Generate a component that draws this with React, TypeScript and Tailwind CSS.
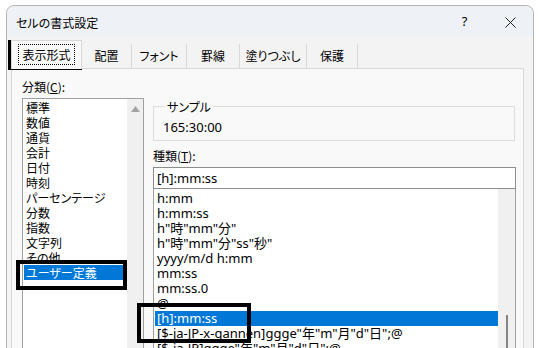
import React from "react";

const cats = [
  "標準",
  "数値",
  "通貨",
  "会計",
  "日付",
  "時刻",
  "パーセンテージ",
  "分数",
  "指数",
  "文字列",
  "その他",
  "ユーザー定義",
];

const types = [
  "h:mm",
  "h:mm:ss",
  'h"時"mm"分"',
  'h"時"mm"分"ss"秒"',
  "yyyy/m/d h:mm",
  "mm:ss",
  "mm:ss.0",
  "@",
  "[h]:mm:ss",
  '[$-ja-JP-x-gannen]ggge"年"m"月"d"日";@',
  '[$-ja-JP]ggge"年"m"月"d"日";@',
  "[$-ja-JP]gggy",
];

const tabs = [
  { label: "配置", w: "w-[50px]" },
  { label: "フォント", w: "w-[55px]" },
  { label: "罫線", w: "w-[53px]" },
  { label: "塗りつぶし", w: "w-[67px]" },
  { label: "保護", w: "w-[51px]" },
];

export default function App() {
  return (
    <div className="relative h-[348px] w-[539px] overflow-hidden bg-white pl-[6px] pt-[5px] font-['Noto_Sans_CJK_JP',sans-serif] text-[12px] text-black [font-feature-settings:'palt']">
      <div className="flex w-[528px] flex-col rounded-t-[8px] border border-[#b4b4b4] bg-[#f3f3f3]">
        {/* title bar */}
        <div className="flex h-[30px] shrink-0 items-center rounded-t-[8px] bg-[#eef2f6] pl-[9px] pt-[2px]">
          <div className="flex-1 leading-[15px]">セルの書式設定</div>
          <div className="flex h-full w-[45px] items-center justify-center font-['Noto_Sans',sans-serif] text-[13px]">?</div>
          <div className="flex h-full w-[46px] items-center justify-center">
            <svg width="11" height="11" viewBox="0 0 11 11">
              <path d="M0.5 0.5 L10.5 10.5 M10.5 0.5 L0.5 10.5" stroke="#222" strokeWidth="1" />
            </svg>
          </div>
        </div>

        {/* tabs */}
        <div className="flex h-[32px] shrink-0 items-end pl-[4px]">
          <div className="relative z-10 -mb-px flex h-[29px] w-[71px] items-start justify-center border border-b-0 border-[#d9d9d9] bg-[#f9f9f9] pt-[3px]">
            <span className="border border-dotted border-black px-[3px] leading-[19px]">表示形式</span>
          </div>
          {tabs.map((t) => (
            <div
              key={t.label}
              className={`${t.w} h-[24px] shrink-0 whitespace-nowrap border-r border-[#d9d9d9] text-center leading-[24px]`}
            >
              {t.label}
            </div>
          ))}
        </div>

        {/* panel */}
        <div className="ml-[4px] flex w-[513px] shrink-0 border border-[#d9d9d9] bg-[#f9f9f9] pt-[10px]">
          {/* category */}
          <div className="flex flex-col pl-[10px]">
            <div className="h-[15px] leading-[15px]">
              分類(<span className="underline">C</span>):
            </div>
            <div className="mt-[4px] flex h-[300px] w-[122px] border border-[#a0a0a0] bg-white">
              <div className="flex-1 pt-[1px]">
                {cats.map((c) => (
                  <div
                    key={c}
                    className={
                      c === "ユーザー定義"
                        ? "ml-[1px] h-[15px] bg-[#0078d7] pl-[2px] leading-[15px] text-white"
                        : "h-[15px] pl-[3px] leading-[15px]"
                    }
                  >
                    {c}
                  </div>
                ))}
              </div>
              <div className="flex w-[16px] justify-center bg-[#f0f0f0] pt-[7px]">
                <svg width="9" height="6" viewBox="0 0 9 6">
                  <path d="M4.5 0 L9 6 L0 6 Z" fill="#a3a3a3" />
                </svg>
              </div>
            </div>
          </div>

          {/* right column */}
          <div className="ml-[9px] flex w-[363px] flex-col">
            <fieldset className="mr-px mt-[20px] border border-[#dcdcdc] px-[9px] pb-[5px]">
              <legend className="ml-[2px] px-[2px] leading-[15px]">サンプル</legend>
              <div className="mt-[6px] font-['Noto_Sans',sans-serif] text-[13px] leading-[15px]">165:30:00</div>
            </fieldset>
            <div className="mt-[7px] h-[15px] leading-[15px]">
              種類(<span className="underline">T</span>):
            </div>
            <div className="mt-[4px] h-[22px] border border-[#8c8c8c] bg-white pl-[3px] font-['Noto_Sans',sans-serif] text-[13px] leading-[20px]">
              [h]:mm:ss
            </div>
            <div className="flex h-[300px] border border-t-0 border-[#a0a0a0] bg-white font-['Noto_Sans','Noto_Sans_CJK_JP',sans-serif] text-[13px]">
              <div className="flex-1 pt-[2px]">
                {types.map((t) => (
                  <div
                    key={t}
                    className={
                      t === "[h]:mm:ss"
                        ? "ml-[1px] h-[15px] whitespace-nowrap bg-[#0078d7] pl-[2px] leading-[15px] text-white"
                        : "h-[15px] whitespace-nowrap pl-[3px] leading-[15px]"
                    }
                  >
                    {t}
                  </div>
                ))}
              </div>
              <div className="flex w-[17px] justify-center bg-[#f0f0f0] pt-[126px]">
                <div className="h-[200px] w-[2px] bg-[#858585]" />
              </div>
            </div>
          </div>
        </div>
      </div>

      {/* annotation boxes */}
      <div className="absolute left-[8px] top-[40px] h-[30px] w-[74px] border-[4px] border-black" />
      <div className="absolute left-[16px] top-[260px] h-[30px] w-[111px] border-[4px] border-black" />
      <div className="absolute left-[137px] top-[303px] h-[40px] w-[114px] border-[4px] border-black" />
    </div>
  );
}
